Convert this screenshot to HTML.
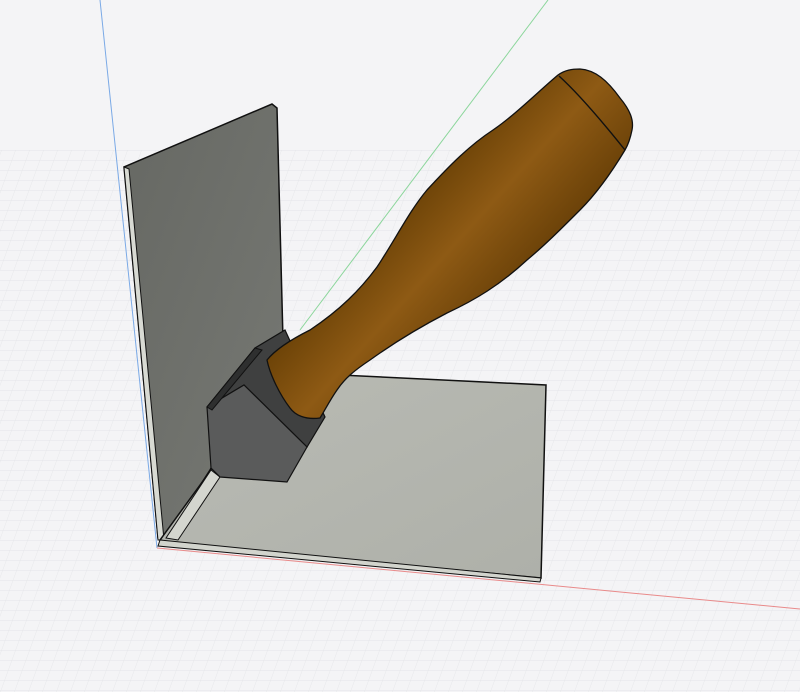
<!DOCTYPE html>
<html><head><style>html,body{margin:0;padding:0;background:#f4f4f6;width:800px;height:692px;overflow:hidden}</style></head>
<body>
<svg width="800" height="692" viewBox="0 0 800 692" xmlns="http://www.w3.org/2000/svg">
<defs>
<pattern id="g" width="14" height="10" patternUnits="userSpaceOnUse" patternTransform="skewX(-20)">
<path d="M0 0H14M0 0V10" stroke="#dcdde2" stroke-width="0.8" fill="none"/>
</pattern>
<linearGradient id="vp" x1="0" y1="0" x2="1" y2="1">
<stop offset="0" stop-color="#666863"/><stop offset="1" stop-color="#777974"/></linearGradient>
<linearGradient id="hp" x1="0" y1="0" x2="1" y2="1">
<stop offset="0" stop-color="#b9bbb4"/><stop offset="1" stop-color="#aeb0a9"/></linearGradient>
<linearGradient id="hd" gradientUnits="userSpaceOnUse" x1="440" y1="170" x2="540" y2="260">
<stop offset="0" stop-color="#6e4408"/><stop offset=".45" stop-color="#8e5a14"/><stop offset="1" stop-color="#6a4108"/></linearGradient>
</defs>
<rect width="800" height="692" fill="#f4f4f6"/>
<rect y="150" width="800" height="542" fill="url(#g)" opacity="0.7"/>
<line x1="100" y1="0" x2="157" y2="548" stroke="#7aa9e6" stroke-width="1"/>
<line x1="548" y1="0" x2="300" y2="330" stroke="#8bd69b" stroke-width="1"/>
<line x1="157" y1="548" x2="800" y2="609" stroke="#e98a8a" stroke-width="1"/>
<polygon points="124,167 272,104 277,108 283,340 210,470 165,540 158,538" fill="url(#vp)" stroke="#111" stroke-width="1.5"/>
<polygon points="124,167 129,169 164,540 158,540" fill="#d8dad3" stroke="#111" stroke-width="1"/>
<polygon points="340,375 546,385 541,578 172,543 160,540 211,470 300,445" fill="url(#hp)" stroke="#111" stroke-width="1.5"/>
<polygon points="160,540 541,578 540,582 158,546" fill="#d2d4cd" stroke="#111" stroke-width="1"/>
<polygon points="211,470 220,477 178,540 166,538" fill="#d4d6cf" stroke="#111" stroke-width="1"/>
<polygon points="207,407 255,348 285,330 325,417 307,447 244,385" fill="#3f4040" stroke="#111" stroke-width="1.2"/>
<polygon points="207,407 244,385 307,447 287,482 220,477 211,468" fill="#5a5b5b" stroke="#111" stroke-width="1.2"/>
<polygon points="207,407 255,348 262,350 212,410" fill="#2e2f2f" stroke="#111" stroke-width="1"/>
<path d="M267,360 C275,350 290,340 310,330 C340,310 360,290 377,267 C395,240 410,210 427,190 C450,165 470,145 493,130 C515,115 540,90 558,75 C565,70 572,69 580,69 C595,70 607,80 620,98 C630,110 634,120 632,130 C630,140 628,145 625,150 C610,175 595,195 580,210 C560,230 545,245 527,260 C500,285 475,300 447,313 C420,327 395,342 370,360 C355,370 345,378 337,390 C330,400 325,410 320,418 C305,420 295,415 290,408 C280,395 270,375 267,360 Z" fill="url(#hd)" stroke="#111" stroke-width="1.3"/>
<path d="M559,76 C580,95 605,125 625,150" stroke="#111" stroke-width="1.4" fill="none"/>
</svg>
</body></html>
